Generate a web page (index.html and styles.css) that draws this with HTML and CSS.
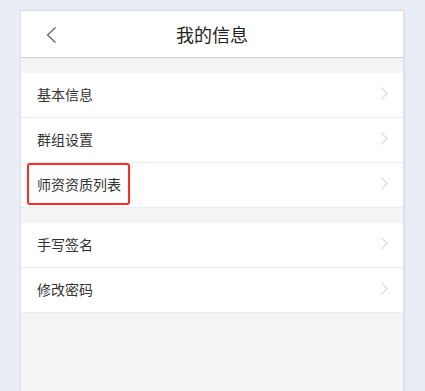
FILE: index.html
```html
<!DOCTYPE html>
<html lang="zh-CN">
<head>
  <meta charset="UTF-8">
  <title>我的信息</title>
  <link rel="stylesheet" href="styles.css">
</head>
<body>
  <div class="phone">
    <header class="nav">
      <span class="back">
        <svg width="12" height="18" viewBox="0 0 12 18"><path d="M10.5 1.5 L2.5 9 L10.5 16.5" fill="none" stroke="#666" stroke-width="1.3"/></svg>
      </span>
      <h1>我的信息</h1>
    </header>

    <div class="gap"></div>
    <ul class="menu">
      <li><span>基本信息</span><i class="arrow"></i></li>
      <li><span>群组设置</span><i class="arrow"></i></li>
      <li class="marked"><span>师资资质列表</span><i class="arrow"></i></li>
    </ul>

    <div class="gap"></div>
    <ul class="menu">
      <li><span>手写签名</span><i class="arrow"></i></li>
      <li><span>修改密码</span><i class="arrow"></i></li>
    </ul>
  </div>
</body>
</html>
```

FILE: styles.css
```css
body {
  margin: 0;
  background: #e8edf6;
  font-family: "Noto Sans CJK SC", "Noto Sans", sans-serif;
  color: #333;
  overflow: hidden;
}
.phone {
  margin: 10px 0 0 20px;
  width: 382px;
  height: 381px;
  background: #f4f4f4;
  border: 1px solid #dcdfe4;
  border-bottom: none;
  box-shadow: 1px 0 3px rgba(0, 0, 0, 0.06);
}

.nav {
  position: relative;
  height: 46px;
  background: #fff;
  border-bottom: 1px solid #cfcfcf;
  display: flex;
  align-items: center;
  justify-content: center;
}
.nav h1 {
  margin: 0;
  font-size: 18px;
  font-weight: normal;
  color: #222;
}
.back {
  position: absolute;
  left: 24px;
  top: 15px;
  display: flex;
}

.gap { height: 15px; }

.menu {
  list-style: none;
  margin: 0;
  padding: 0;
  background: #fff;
}
.menu li {
  position: relative;
  height: 44px;
  padding: 0 16px;
  display: flex;
  align-items: center;
  justify-content: space-between;
  font-size: 14px;
  line-height: 20px;
  border-bottom: 1px solid #ececec;
}
.menu li span { margin-top: -2px; }
.arrow {
  width: 8px;
  height: 8px;
  margin: -4px 1px 0 0;
  border-top: 1px solid #d4d4d4;
  border-right: 1px solid #d4d4d4;
  transform: rotate(45deg);
}

.marked span { position: relative; }
.marked span::after {
  content: "";
  position: absolute;
  left: -10px;
  right: -9px;
  top: -11px;
  bottom: -11px;
  border: 2px solid #ff2a24;
  border-radius: 3px;
}
```
